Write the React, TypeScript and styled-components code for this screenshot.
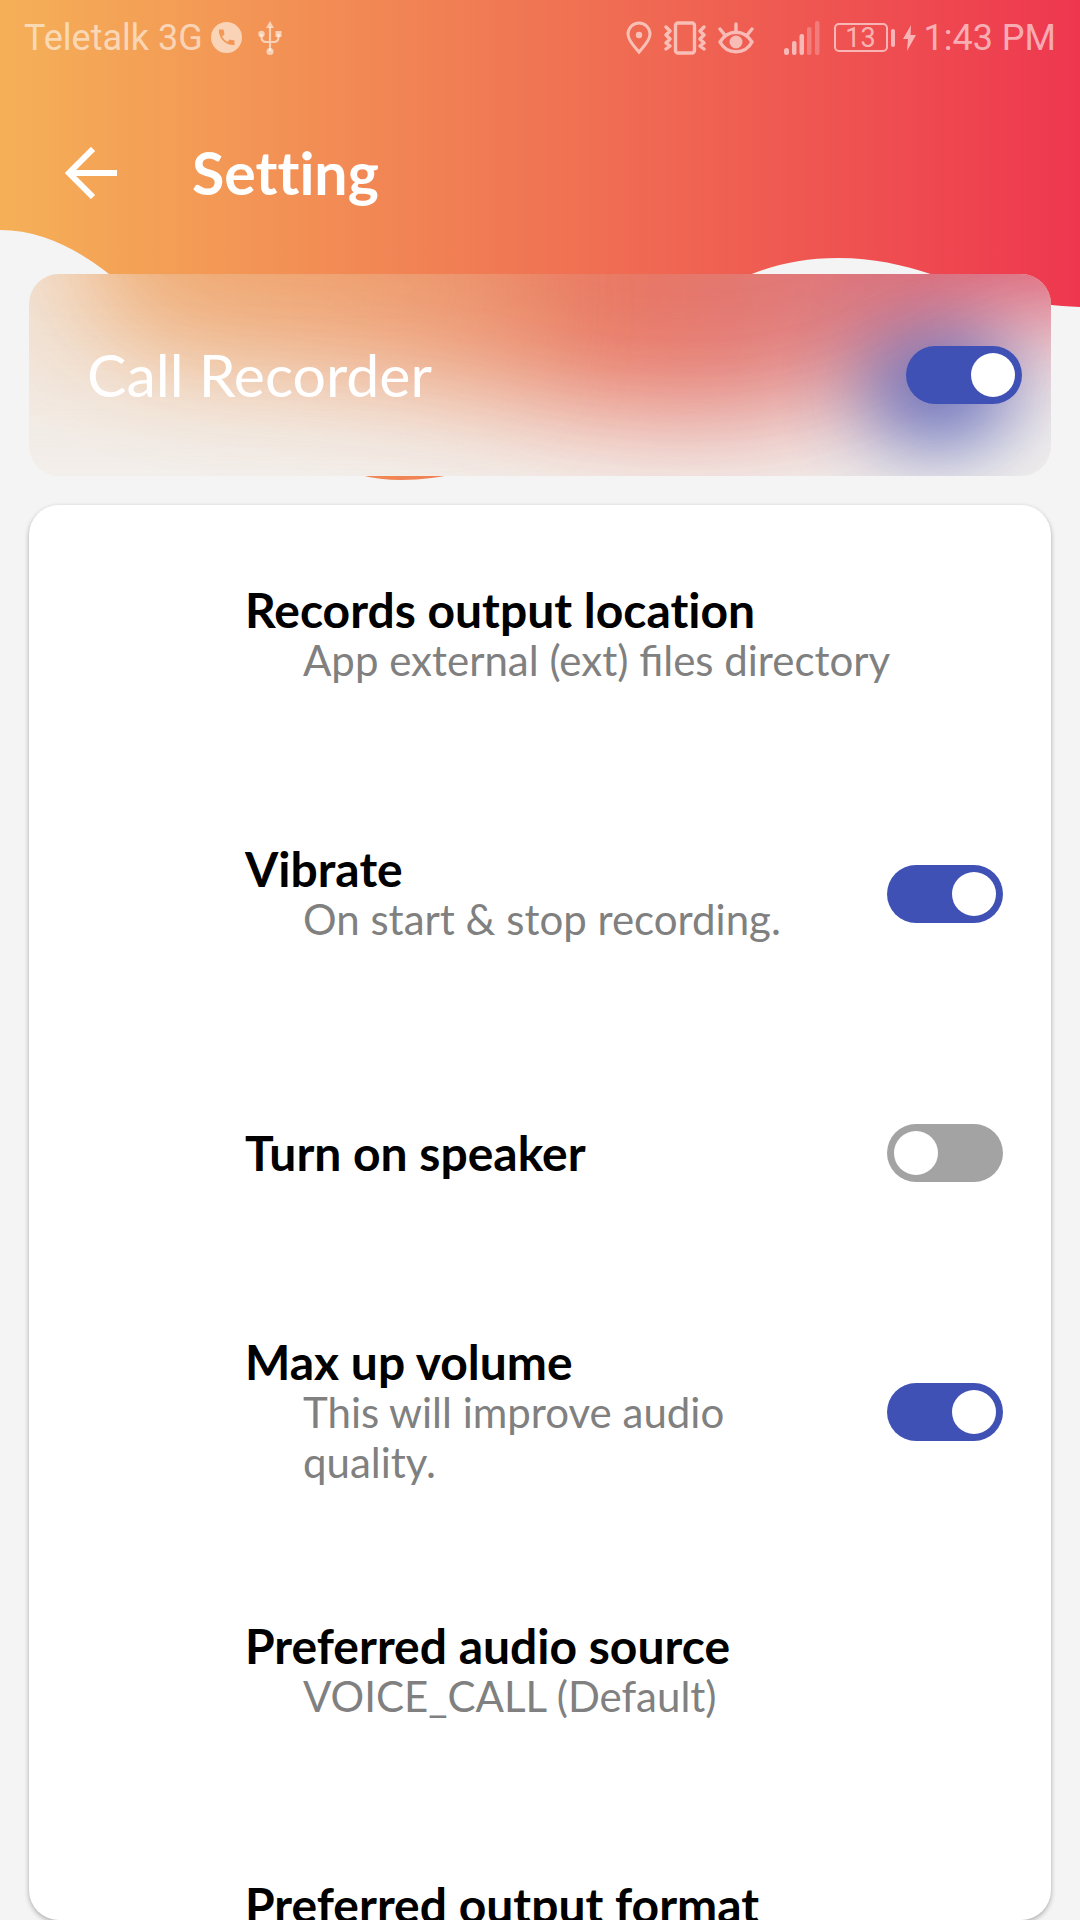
import React, { useState } from "react";
import styled, { createGlobalStyle } from "styled-components";

const GlobalStyle = createGlobalStyle`
  *, *::before, *::after { box-sizing: border-box; }
  body { margin: 0; background: #f4f4f4; }
  h1, h2, p, ul { margin: 0; padding: 0; }
`;

const Screen = styled.div`
  position: relative;
  display: flex;
  flex-direction: column;
  height: 100vh;
  overflow: hidden;
  background: #f4f4f4;
  font-family: Lato, "Open Sans", sans-serif;
`;

const Wave = styled.svg`
  position: absolute;
  top: 0;
  left: 0;
  width: 100%;
  height: 480px;
`;

const StatusBar = styled.div`
  position: relative;
  flex: none;
  display: flex;
  align-items: center;
  justify-content: space-between;
  height: 72px;
  padding: 3px 24px 0;
  color: rgba(255, 255, 255, 0.58);
  font: 36px/40px Roboto, sans-serif;
`;

const StatusGroup = styled.div<{ $gap: number }>`
  display: flex;
  align-items: center;
  gap: ${(p) => p.$gap}px;
`;

const StatusIcon = styled.svg`
  display: block;
  flex: none;
`;

const Battery = styled.span`
  display: flex;
  align-items: center;
  gap: 3px;
  margin-left: 6px;
`;

const BatteryCell = styled.span`
  display: grid;
  place-items: center;
  width: 54px;
  height: 29px;
  border: 2px solid currentColor;
  border-radius: 5px;
  font-size: 27px;
  line-height: 24px;
`;

const BatteryTip = styled.span`
  width: 4px;
  height: 18px;
  border-radius: 2px;
  background: currentColor;
`;

const AppBar = styled.header`
  position: relative;
  flex: none;
  display: flex;
  align-items: center;
  gap: 61px;
  height: 202px;
  padding: 0 51px;
  color: #fff;
`;

const BackButton = styled.button`
  display: grid;
  place-items: center;
  width: 80px;
  height: 80px;
  padding: 0;
  border: 0;
  background: none;
  color: inherit;
  cursor: pointer;
`;

const Title = styled.h1`
  font-size: 59px;
  line-height: 72px;
  font-weight: 700;
  font-variant-ligatures: none;
`;

const Content = styled.main`
  flex: 1;
  min-height: 0;
  display: flex;
  flex-direction: column;
  gap: 29px;
  padding: 0 29px;
`;

const GlassCard = styled.section`
  position: relative;
  flex: none;
  display: flex;
  align-items: center;
  justify-content: space-between;
  height: 202px;
  padding: 0 29px 0 58px;
  border-radius: 30px;
  overflow: hidden;
  background: #f3f0ed;
`;

const Frost = styled.svg`
  position: absolute;
  top: 0;
  left: 0;
  width: 100%;
  height: 100%;
`;

const GlassLabel = styled.label`
  position: relative;
  color: #fff;
  font-size: 59px;
  line-height: 72px;
`;

const Switch = styled.input`
  position: relative;
  appearance: none;
  flex: none;
  display: flex;
  align-items: center;
  justify-content: flex-start;
  width: 116px;
  height: 58px;
  margin: 0;
  padding: 7px;
  border-radius: 29px;
  background: #a3a3a3;
  cursor: pointer;

  &::before {
    content: "";
    width: 44px;
    height: 44px;
    border-radius: 50%;
    background: #fff;
  }

  &:checked {
    justify-content: flex-end;
    background: #3f51b5;
  }
`;

const SettingsCard = styled.ul`
  flex: 1;
  min-height: 0;
  overflow: hidden;
  list-style: none;
  border-radius: 30px;
  background: #fff;
  box-shadow: 0 2px 5px rgba(0, 0, 0, 0.3);
`;

const Row = styled.li`
  display: flex;
  align-items: center;
  gap: 48px;
  height: 259px;
  padding: 0 48px 0 216px;
`;

const RowText = styled.div`
  flex: 1;
  display: flex;
  flex-direction: column;
`;

const RowTitle = styled.label`
  color: #000;
  font-size: 48px;
  line-height: 50px;
  font-weight: 700;
  font-variant-ligatures: none;
`;

const RowDetail = styled.p`
  padding-left: 58px;
  color: #808080;
  font-size: 42px;
  line-height: 50px;
`;

type Setting = { id: string; title: string; detail?: string; on?: boolean };

const settings: Setting[] = [
  { id: "location", title: "Records output location", detail: "App external (ext) files directory" },
  { id: "vibrate", title: "Vibrate", detail: "On start & stop recording.", on: true },
  { id: "speaker", title: "Turn on speaker", on: false },
  { id: "volume", title: "Max up volume", detail: "This will improve audio quality.", on: true },
  { id: "source", title: "Preferred audio source", detail: "VOICE_CALL (Default)" },
  { id: "format", title: "Preferred output format", detail: "\u00a0" },
];

function Toggle({ id, initial }: { id: string; initial: boolean }) {
  const [on, setOn] = useState(initial);
  return <Switch id={id} type="checkbox" role="switch" checked={on} onChange={() => setOn(!on)} />;
}

function StatusIcons() {
  return (
    <StatusGroup $gap={12}>
      <StatusIcon width="26" height="34" viewBox="0 0 26 34" fill="none" stroke="currentColor" strokeWidth="3">
        <path d="M13 31C9 26 2 20 2 13a11 11 0 0 1 22 0c0 7-7 13-11 18Z" />
        <circle cx="13" cy="14" r="3.2" fill="currentColor" stroke="none" />
      </StatusIcon>
      <StatusIcon width="42" height="34" viewBox="0 0 42 34" fill="none" stroke="currentColor" strokeWidth="3.4" strokeLinecap="round" strokeLinejoin="round">
        <rect x="11.5" y="2" width="19" height="30" rx="2.5" />
        <path d="M2 6l4 4-4 4 4 4-4 4 4 3-4 3M40 6l-4 4 4 4-4 4 4 4-4 3 4 3" />
      </StatusIcon>
      <StatusIcon width="36" height="34" viewBox="0 0 36 34" fill="none" stroke="currentColor" strokeWidth="3.4" strokeLinecap="round" strokeLinejoin="round">
        <path d="M2 21C10 8 26 8 34 21C27 34 9 34 2 21ZM18 3v7M2 8l4 5M34 8l-4 5" />
        <circle cx="18" cy="21" r="6.5" fill="currentColor" stroke="none" />
      </StatusIcon>
    </StatusGroup>
  );
}

export default function App() {
  return (
    <>
      <GlobalStyle />
      <Screen>
        <Wave viewBox="0 0 1080 480" preserveAspectRatio="none" aria-hidden="true">
          <defs>
            <linearGradient id="sunset" x1="0" x2="1" y1="0" y2="0">
              <stop offset="0" stopColor="#f5b057" />
              <stop offset="0.5" stopColor="#f07553" />
              <stop offset="1" stopColor="#ee374f" />
            </linearGradient>
          </defs>
          <path
            fill="url(#sunset)"
            d="M0 0H1080V307C970 303 930 258 838 258C640 258 600 480 401 480C235 480 150 230 0 230Z"
          />
        </Wave>

        <StatusBar>
          <StatusGroup $gap={8}>
            <span>Teletalk 3G</span>
            <StatusIcon width="31" height="31" viewBox="0 0 31 31">
              <path
                fill="currentColor"
                fillRule="evenodd"
                d="M15.5 0a15.5 15.5 0 1 0 0 31a15.5 15.5 0 0 0 0-31ZM8 7.5h4.500l1 5-2.500 2q2 3.500 5.500 5.500l2-2.500 5 1V23C15 24 7 16 8 7.500Z"
              />
            </StatusIcon>
            <StatusIcon width="40" height="34" viewBox="-8 0 40 34" fill="none" stroke="currentColor" strokeWidth="2.2">
              <path d="M12 6v24M3.500 13v3q0 5 5 5h7q5 0 5-5v-3" />
              <path d="M12 0l4 7H8Z" fill="currentColor" stroke="none" />
              <circle cx="3.5" cy="13" r="3.2" fill="currentColor" stroke="none" />
              <rect x="17.5" y="10" width="6" height="6" fill="currentColor" stroke="none" />
              <circle cx="12" cy="30.5" r="3.5" fill="currentColor" stroke="none" />
            </StatusIcon>
          </StatusGroup>
          <StatusGroup $gap={8}>
            <StatusIcons />
            <StatusIcon width="58" height="34" viewBox="-22 0 58 34" fill="currentColor">
              <rect x="0" y="27" width="5" height="7" rx="2.5" />
              <rect x="8" y="20" width="4.5" height="14" rx="2" />
              <rect x="15.5" y="13" width="4.5" height="21" rx="2" />
              <rect x="23" y="6" width="4.5" height="28" rx="2" opacity="0.4" />
              <rect x="31" y="0" width="4.5" height="34" rx="2" opacity="0.4" />
            </StatusIcon>
            <Battery>
              <BatteryCell>13</BatteryCell>
              <BatteryTip />
            </Battery>
            <StatusIcon width="13" height="26" viewBox="0 0 13 26" fill="currentColor">
              <path d="M8 0L0 14h5L4 26l9-16H7.500Z" />
            </StatusIcon>
            <span>1:43 PM</span>
          </StatusGroup>
        </StatusBar>

        <AppBar>
          <BackButton type="button" aria-label="Back">
            <svg width="52" height="52" viewBox="0 0 52 52" fill="none" stroke="currentColor" strokeWidth="6">
              <path d="M28 2L4 26L28 50M4 26H52" />
            </svg>
          </BackButton>
          <Title>Setting</Title>
        </AppBar>

        <Content>
          <GlassCard>
            <Frost viewBox="0 0 1022 202" preserveAspectRatio="none" aria-hidden="true">
              <defs>
                <linearGradient id="frost" gradientUnits="userSpaceOnUse" x1="-29" x2="1051" y1="0" y2="0">
                  <stop offset="0" stopColor="#efb26a" />
                  <stop offset="0.33" stopColor="#ef935f" />
                  <stop offset="0.6" stopColor="#e76d5c" />
                  <stop offset="0.77" stopColor="#dc7478" />
                  <stop offset="1" stopColor="#dc4864" />
                </linearGradient>
                <filter id="soft" filterUnits="userSpaceOnUse" x="-400" y="-500" width="1900" height="1000" colorInterpolationFilters="sRGB">
                  <feGaussianBlur stdDeviation="54" />
                </filter>
                <filter id="glow" filterUnits="userSpaceOnUse" x="500" y="-200" width="800" height="600" colorInterpolationFilters="sRGB">
                  <feGaussianBlur stdDeviation="42" />
                </filter>
              </defs>
              <path
                fill="url(#frost)"
                opacity="0.94"
                filter="url(#soft)"
                d="M52 -400H1300V40H980C900 90 830 120 740 140C620 150 540 135 450 112C350 90 250 85 140 78C80 60 52 30 52 -40Z"
              />
              <path fill="#efb88a" opacity="0.22" filter="url(#soft)" d="M-100 -100H500V130H-100Z" />
              <ellipse cx="910" cy="116" rx="76" ry="54" fill="#3f51b5" opacity="0.86" filter="url(#glow)" />
            </Frost>
            <GlassLabel htmlFor="recorder">Call Recorder</GlassLabel>
            <Toggle id="recorder" initial />
          </GlassCard>

          <SettingsCard>
            {settings.map((s) => (
              <Row key={s.id}>
                <RowText>
                  <RowTitle as={s.on === undefined ? "h2" : "label"} htmlFor={s.on === undefined ? undefined : s.id}>
                    {s.title}
                  </RowTitle>
                  {s.detail && <RowDetail>{s.detail}</RowDetail>}
                </RowText>
                {s.on !== undefined && <Toggle id={s.id} initial={s.on} />}
              </Row>
            ))}
          </SettingsCard>
        </Content>
      </Screen>
    </>
  );
}
